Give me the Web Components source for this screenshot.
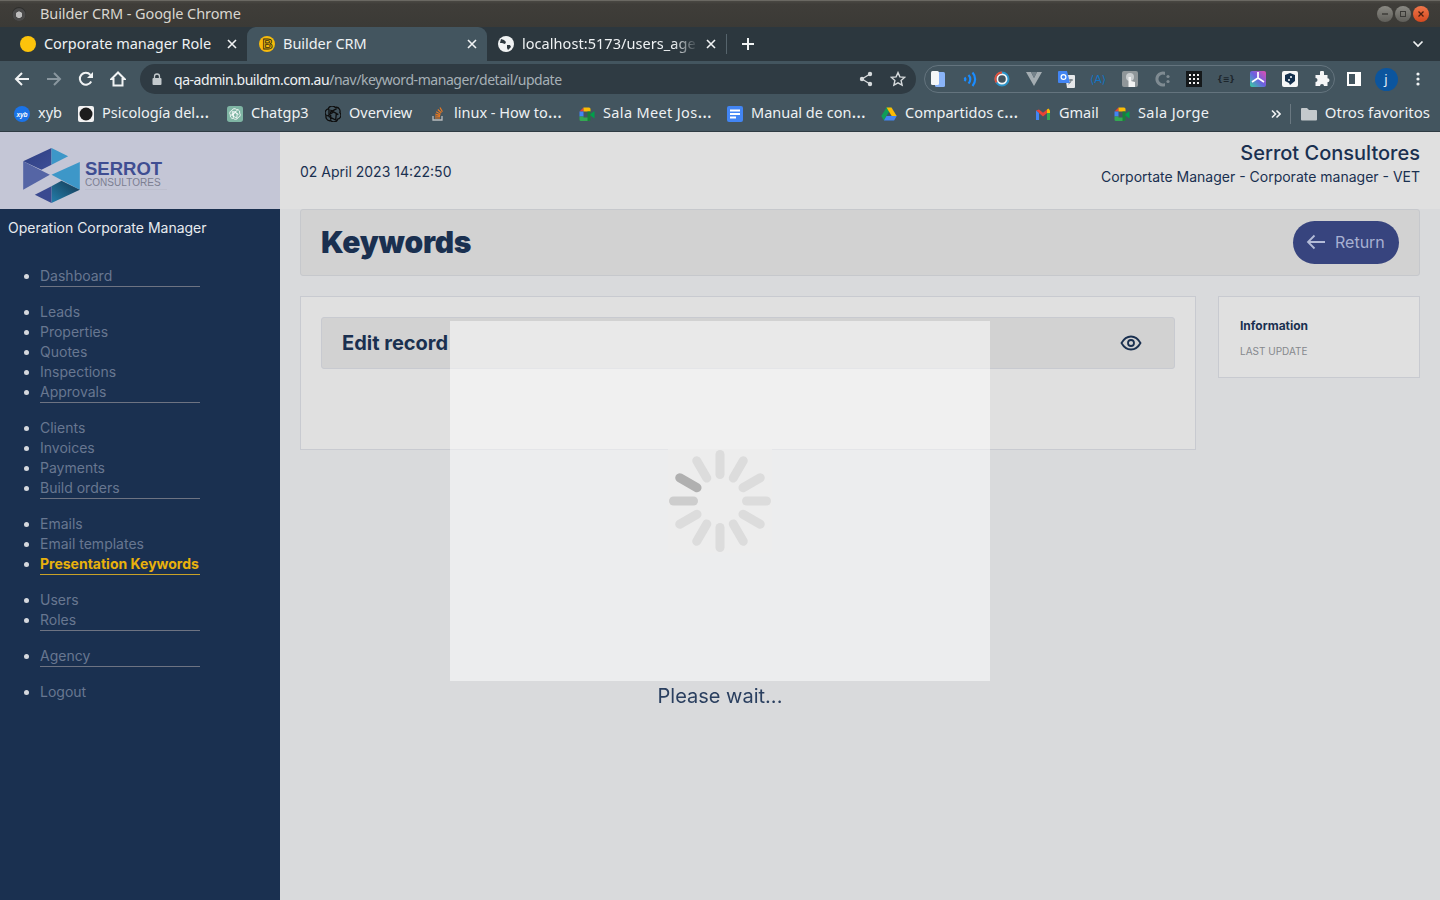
<!DOCTYPE html>
<html lang="en">
<head>
<meta charset="utf-8">
<title>Builder CRM</title>
<style>
  html, body { margin: 0; height: 100%; overflow: hidden; background: #d9dadc; }
  body { display: flex; flex-direction: column; font-family: "Inter", sans-serif; }
</style>
</head>
<body>
<browser-frame></browser-frame>
<crm-app>
  <side-nav slot="nav"></side-nav>
  <crm-header></crm-header>
  <title-bar></title-bar>
  <crm-content></crm-content>
</crm-app>
<wait-overlay></wait-overlay>

<script>
const MEET = `<svg width="16" height="16" viewBox="0 0 16 16"><path fill="#ea4335" d="M4.500 1.500V5.500H0.500z"/><path fill="#fbbc04" d="M4.500 1.500H10a1.500 1.500 0 0 1 1.500 1.500V5.500H4.500z"/><path fill="#4285f4" d="M0.500 5.500h4v5h-4z"/><path fill="#34a853" d="M0.500 10.500h4v1h6.500v3.500H2a1.500 1.500 0 0 1-1.500-1.500z"/><path fill="#188038" d="M8.500 5.500h3v8a1.500 1.500 0 0 1-1.500 1.500H8.500z"/><path fill="#00a04a" d="M11.500 8l4-3v7.500l-4-3z"/></svg>`;
const KNOT = 'M22.28 9.82a5.98 5.98 0 0 0-.52-4.91 6.05 6.05 0 0 0-6.51-2.9A6.07 6.07 0 0 0 4.98 4.18a5.98 5.98 0 0 0-4 2.9 6.05 6.05 0 0 0 .74 7.1 5.98 5.98 0 0 0 .51 4.91 6.05 6.05 0 0 0 6.52 2.9A5.98 5.98 0 0 0 13.26 24a6.06 6.06 0 0 0 5.77-4.21 5.99 5.99 0 0 0 4-2.9 6.06 6.06 0 0 0-.75-7.07zM8.5 20.5V9l9-5M3 15l10-6 7 4M6 5v11l10 5 1-10-9-5';

class BrowserFrame extends HTMLElement {
  constructor() {
    super();
    this.shadowDOM = this.attachShadow({mode: 'open'});
  }

  connectedCallback() {
    this.render();
  }

  render() {
    this.shadowDOM.innerHTML = `
      <style>
        :host { display: block; flex: none; font-family: "Noto Sans", "Open Sans", sans-serif; font-size: 14.5px; color: #eef1f3; }
      </style>
      <window-title></window-title>
      <tab-strip></tab-strip>
      <nav-toolbar></nav-toolbar>
      <bookmark-bar></bookmark-bar>
    `;
  }
}

class WindowTitle extends HTMLElement {
  constructor() {
    super();
    this.shadowDOM = this.attachShadow({mode: 'open'});
  }

  connectedCallback() {
    this.shadowDOM.innerHTML = `
      <style>
        :host { display: flex; align-items: center; height: 27px; padding: 0 11px 0 12px; background: linear-gradient(#4a4843 0, #3f3d39 3px, #3b3a36); color: #d8d6d0; border-top: 1px solid #6a6862; box-sizing: border-box; }
        .app { width: 14px; height: 14px; margin-right: 14px; border-radius: 50%; background: radial-gradient(circle at 50% 55%, #bdbdbd 0 3px, #4a4a4a 3.5px 6px, #2e2e2c 7px); }
        span { flex: 1; margin-bottom: 2px; letter-spacing: -.09px; }
        .btns { display: flex; gap: 2px; }
        .btns i { display: flex; width: 16px; height: 16px; border-radius: 50%; background: linear-gradient(#8a8983, #5f5e59); align-items: center; justify-content: center; }
        .btns i:last-child { background: linear-gradient(#f0764a, #d4491f); }
      </style>
      <div class="app"></div>
      <span>Builder CRM - Google Chrome</span>
      <div class="btns">
        <i><svg width="8" height="8"><path d="M1 4h6" stroke="#3a3936" stroke-width="1.4"/></svg></i>
        <i><svg width="8" height="8"><rect x="1.5" y="1.5" width="5" height="5" fill="none" stroke="#3a3936"/></svg></i>
        <i><svg width="8" height="8"><path d="M1.5 1.5l5 5m0-5l-5 5" stroke="#4a2011" stroke-width="1.3"/></svg></i>
      </div>
    `;
  }
}

class TabStrip extends HTMLElement {
  constructor() {
    super();
    this.shadowDOM = this.attachShadow({mode: 'open'});
  }

  connectedCallback() {
    const close = `<svg class="x" width="10" height="10"><path d="M1 1l8 8m0-8l-8 8" stroke="#f1f3f4" stroke-width="1.6"/></svg>`;
    this.shadowDOM.innerHTML = `
      <style>
        :host { display: flex; align-items: stretch; height: 34px; padding-left: 7px; background: #2c373e; }
        .tab { position: relative; display: flex; align-items: center; width: 240px; box-sizing: border-box; padding: 0 10px 0 13px; }
        .tab.on { background: #43555f; border-radius: 9px 9px 0 0; padding-left: 12px; }
        .tab.last { width: 239px; padding-left: 11px; }
        .tab svg.f { flex: none; margin-right: 8px; }
        .tab span { flex: 1; white-space: nowrap; margin-bottom: 2px; letter-spacing: -.04px; }
        .tab span.fade { letter-spacing: .05px; -webkit-mask-image: linear-gradient(90deg, #000 85%, transparent 99%); mask-image: linear-gradient(90deg, #000 85%, transparent 99%); }
        .x { flex: none; margin-left: 6px; }
        .sep { width: 1px; height: 20px; background: #56646c; align-self: center; }
        .plus { margin-left: 14px; align-self: center; }
        .chev { margin-left: auto; margin-right: 16px; align-self: center; }
      </style>
      <div class="tab"><svg class="f" width="16" height="16"><circle cx="8" cy="8" r="8" fill="#fcc30b"/></svg><span>Corporate manager Role</span>${close}</div>
      <div class="tab on"><svg class="f" width="16" height="16" viewBox="0 0 16 16"><circle cx="8" cy="8" r="8" fill="#f7bb0c"/><text x="8.500" y="13" text-anchor="middle" font-size="14" font-weight="700" font-family="Liberation Sans" fill="#f7bb0c" stroke="#332c10" stroke-width=".9">B</text></svg><span>Builder CRM</span>${close}</div>
      <div class="tab last"><svg class="f" width="16" height="16" viewBox="0 0 16 16"><circle cx="8" cy="8" r="8" fill="#f1f3f4"/><path d="M3 3l3 1 2 2-1 2-3-1-2 0zM9 9l3 0 1 2-3 3-1-2z" fill="#2c373e"/></svg><span class="fade">localhost:5173/users_age</span>${close}</div>
      <div class="sep"></div>
      <svg class="plus" width="14" height="14"><path d="M7 1v12M1 7h12" stroke="#f1f3f4" stroke-width="2"/></svg>
      <svg class="chev" width="12" height="8"><path d="M1.5 1.5L6 6l4.5-4.5" fill="none" stroke="#f1f3f4" stroke-width="1.7"/></svg>
    `;
  }
}

class NavToolbar extends HTMLElement {
  constructor() {
    super();
    this.shadowDOM = this.attachShadow({mode: 'open'});
  }

  connectedCallback() {
    this.shadowDOM.innerHTML = `
      <style>
        :host { display: flex; align-items: center; height: 36px; padding: 0 6px; background: #43555f; }
        .b { flex: none; width: 32px; height: 30px; display: flex; align-items: center; justify-content: center; }
        .omni { flex: none; margin-left: 6px; width: 776px; height: 30px; border-radius: 15px; background: #2f3b43; display: flex; align-items: center; box-sizing: border-box; padding: 0 2px 0 12px; font-size: 14px; }
        .omni .url { flex: 1; margin-left: 12px; white-space: nowrap; color: #a6b0b6; letter-spacing: -.45px; }
        .omni .url b { font-weight: 400; color: #eef1f3; }
        .pill { flex: none; margin-left: 8px; height: 28px; width: 411px; box-sizing: border-box; border: 1px solid #64747e; border-radius: 14px; display: flex; align-items: center; }
        .e { flex: none; width: 32px; height: 26px; display: flex; align-items: center; justify-content: center; }
        .e:first-child { margin-left: -3px; }
        .e text { font-family: "DejaVu Sans", sans-serif; }
        .av { width: 23px; height: 23px; border-radius: 50%; background: #0b559e; color: #e8f0f8; font-size: 13px; display: flex; align-items: center; justify-content: center; }
      </style>
      <div class="b"><svg width="16" height="16"><path d="M15 8H2M8 2L2 8l6 6" fill="none" stroke="#f1f3f4" stroke-width="2"/></svg></div>
      <div class="b"><svg width="16" height="16"><path d="M1 8h13M8 2l6 6-6 6" fill="none" stroke="#8a979f" stroke-width="2"/></svg></div>
      <div class="b"><svg width="16" height="16" viewBox="0 0 16 16"><path d="M13.2 10.5A6 6 0 1 1 12.4 3.8" fill="none" stroke="#f1f3f4" stroke-width="2"/><path d="M15 1v6H9z" fill="#f1f3f4"/></svg></div>
      <div class="b"><svg width="16" height="16" viewBox="0 0 16 16"><path d="M8 1.5L1.5 8H3.5v6.5h9V8h2z" fill="none" stroke="#f1f3f4" stroke-width="2"/></svg></div>
      <div class="omni">
        <svg width="10" height="12" viewBox="0 0 10 12"><rect x="0.5" y="5" width="9" height="7" rx="1" fill="#c4cacd"/><path d="M2.5 5V3.5a2.5 2.5 0 0 1 5 0V5" fill="none" stroke="#c4cacd" stroke-width="1.3"/></svg>
        <span class="url"><b>qa-admin.buildm.com.au</b>/nav/keyword-manager/detail/update</span>
        <div class="b"><svg width="14" height="16" viewBox="0 0 14 16"><path d="M11 3L3 8l8 5" fill="none" stroke="#d6dadc" stroke-width="1.3"/><circle cx="11" cy="3" r="2.2" fill="#d6dadc"/><circle cx="3" cy="8" r="2.2" fill="#d6dadc"/><circle cx="11" cy="13" r="2.2" fill="#d6dadc"/></svg></div>
        <div class="b"><svg width="16" height="16" viewBox="0 0 16 16"><path d="M8 1.6l1.9 4.3 4.7.5-3.5 3.1 1 4.6L8 11.8l-4.1 2.3 1-4.6L1.4 6.4l4.7-.5z" fill="none" stroke="#d6dadc" stroke-width="1.4"/></svg></div>
      </div>
      <div class="pill">
        <div class="e"><svg width="14" height="18" viewBox="0 0 14 18"><rect x="4" y="2" width="10" height="15" rx="1.5" fill="#8ab4f8"/><rect x="0" y="1" width="8" height="14" rx="1.5" fill="#f4f6f7"/></svg></div>
        <div class="e"><svg width="15" height="16" viewBox="0 0 15 16"><g fill="none" stroke="#1a8cff" stroke-width="2.200"><path d="M1.500 6.500a2.500 2.500 0 0 1 0 3.500"/><path d="M5.500 4a6 6 0 0 1 0 8.500"/><path d="M9.500 1.500a10 10 0 0 1 0 13.500"/></g></svg></div>
        <div class="e"><svg width="16" height="16"><circle cx="8" cy="8" r="6.500" fill="#f2f6f8" stroke="#2a93c9" stroke-width="2"/><path d="M8 1.500a6.500 6.500 0 0 0-5.500 10" fill="none" stroke="#e0503a" stroke-width="2"/><circle cx="8" cy="8" r="3.800" fill="#43555f"/></svg></div>
        <div class="e"><svg width="16" height="14" viewBox="0 0 16 14"><path d="M0 0h5l3 6 3-6h5L8 14z" fill="#a4adb2"/><path d="M5 0l3 6 3-6" fill="#76838b"/></svg></div>
        <div class="e"><svg width="17" height="17" viewBox="0 0 17 17"><path d="M7 4h9a1 1 0 0 1 1 1v11a1 1 0 0 1-1 1H9z" fill="#e6e8ea"/><path d="M1 0h8l3 12H1a1 1 0 0 1-1-1V1a1 1 0 0 1 1-1z" fill="#4285f4"/><circle cx="5.500" cy="6" r="2.400" fill="none" stroke="#fff" stroke-width="1.200"/><path d="M11 9h4M13 8v1c0 2-1 3-2.500 4" fill="none" stroke="#5f6a70"/></svg></div>
        <div class="e"><svg width="20" height="14" viewBox="0 0 20 14"><text x="10" y="11" text-anchor="middle" font-size="11" fill="#1274c4">⟨A⟩</text></svg></div>
        <div class="e"><svg width="16" height="16" viewBox="0 0 16 16"><rect width="16" height="16" rx="2" fill="#8f9699"/><circle cx="8" cy="6" r="4" fill="#c9cdcf"/><path d="M6.500 16V6h2.500v4l4 1v5z" fill="#f2f3f3"/></svg></div>
        <div class="e"><svg width="16" height="20" viewBox="0 0 16 20"><path d="M11 2.800A7.500 7.500 0 1 0 11 17.200V14A4.500 4.500 0 1 1 11 6z" fill="#7f8b92"/><circle cx="14" cy="7.500" r="1.600" fill="#7f8b92"/><circle cx="14" cy="12.500" r="1.600" fill="#7f8b92"/></svg></div>
        <div class="e"><svg width="16" height="16"><rect width="16" height="16" fill="#15191b"/><g fill="#f2f2f2"><rect x="3" y="3" width="2" height="2"/><rect x="7" y="3" width="2" height="2"/><rect x="11" y="3" width="2" height="2"/><rect x="3" y="7" width="2" height="2"/><rect x="7" y="7" width="2" height="2"/><rect x="11" y="7" width="2" height="2"/><rect x="3" y="11" width="2" height="2"/><rect x="7" y="11" width="2" height="2"/><rect x="11" y="11" width="2" height="2"/></g></svg></div>
        <div class="e"><svg width="18" height="12" viewBox="0 0 18 12"><text x="9" y="9" text-anchor="middle" font-size="8" font-weight="700" fill="#1d262c">{≡}</text></svg></div>
        <div class="e"><svg width="16" height="16" viewBox="0 0 16 16"><defs><linearGradient id="lg" x1="0" y1="1" x2="1" y2="0"><stop offset="0" stop-color="#35d0a0"/><stop offset=".5" stop-color="#6a60e0"/><stop offset="1" stop-color="#e24fb0"/></linearGradient></defs><rect width="16" height="16" rx="2" fill="url(#lg)"/><path d="M8 1v6l6 4M8 7l-6 4" fill="none" stroke="#fff" stroke-width="1.700"/></svg></div>
        <div class="e"><svg width="16" height="16" viewBox="0 0 16 16"><rect width="16" height="16" rx="2" fill="#f6f7f7"/><path d="M8 2l5 2v6l-5 4-1-2-4-2V4z" fill="#14304d"/><circle cx="9" cy="6" r="1" fill="#fff"/><circle cx="7" cy="9" r="1" fill="#fff"/></svg></div>
        <div class="e"><svg width="16" height="16" viewBox="0 0 16 16"><path d="M6 1.500a2 2 0 0 1 4 0V4h3.500v3.200a2 2 0 0 1 0 4V15H10a2 2 0 0 0-4 0H1.500v-4a2 2 0 0 0 0-4V4H6z" fill="#f5f6f7"/></svg></div>
      </div>
      <div class="b" style="margin-left:3px"><svg width="14" height="14"><rect x="1" y="1" width="12" height="12" fill="none" stroke="#fff" stroke-width="2"/><rect x="8" y="1" width="5" height="12" fill="#fff"/></svg></div>
      <div class="b"><div class="av">j</div></div>
      <div class="b"><svg width="4" height="14"><circle cx="2" cy="2" r="1.600" fill="#f1f3f4"/><circle cx="2" cy="7" r="1.600" fill="#f1f3f4"/><circle cx="2" cy="12" r="1.600" fill="#f1f3f4"/></svg></div>
    `;
  }
}

class BookmarkItem extends HTMLElement {
  constructor() {
    super();
    this.shadowDOM = this.attachShadow({mode: 'open'});
  }

  connectedCallback() {
    this.shadowDOM.innerHTML = `
      <style>
        :host { display: flex; flex: none; align-items: center; gap: 8px; }
        span { display: block; width: ${this.getAttribute('w')}px; white-space: nowrap; margin-bottom: 4px; letter-spacing: ${this.getAttribute('ls') || 0}px; }
        i { font-style: normal; font-size: 18px; line-height: 0; }
        ::slotted(svg) { display: block; flex: none; }
      </style>
      <slot></slot><span>${this.getAttribute('label')}</span>
    `;
  }
}

class BookmarkBar extends HTMLElement {
  constructor() {
    super();
    this.shadowDOM = this.attachShadow({mode: 'open'});
  }

  connectedCallback() {
    this.shadowDOM.innerHTML = `
      <style>
        :host { display: flex; align-items: center; height: 34px; padding-left: 14px; gap: 16px; background: #43555f; border-bottom: 1px solid #2f3b43; }
        .more { margin-left: auto; display: flex; align-items: center; font-size: 15px; }
        .sep { width: 1px; height: 20px; background: #6a7881; margin: 0 10px 0 9px; }
        .rest { display: flex; align-items: center; gap: 8px; padding-right: 10px; }
        .rest span { margin-bottom: 4px; }
      </style>
      <bookmark-item label="xyb" w="24"><svg width="16" height="16" viewBox="0 0 16 16"><circle cx="8" cy="8" r="8" fill="#1a73e8"/><text x="8" y="10.500" text-anchor="middle" font-size="6.500" font-style="italic" font-weight="700" font-family="Liberation Sans" fill="#fff">xyb</text></svg></bookmark-item>
      <bookmark-item label="Psicología del<i>…</i>" w="109"><svg width="16" height="16"><rect width="16" height="16" rx="2" fill="#f2f2f2"/><circle cx="8" cy="8" r="6.500" fill="#1c1c1c"/></svg></bookmark-item>
      <bookmark-item label="Chatgp3" w="58"><svg width="16" height="16" viewBox="0 0 24 24"><rect width="24" height="24" rx="4" fill="#7fb5a4"/><g transform="translate(4 4) scale(.667)"><path d="${KNOT}" fill="none" stroke="#fff" stroke-width="1.900"/></g></svg></bookmark-item>
      <bookmark-item label="Overview" w="65"><svg width="16" height="16" viewBox="0 0 24 24"><path d="${KNOT}" fill="none" stroke="#0e0e0e" stroke-width="2"/></svg></bookmark-item>
      <bookmark-item label="linux - How to<i>…</i>" w="109"><svg width="16" height="16" viewBox="0 0 16 16"><path d="M3 10v4h9v-4" fill="none" stroke="#b9bcbe" stroke-width="1.300"/><path d="M5 12h5M5 10l5 .4M5.300 8l4.900 1.300M6.200 5.800l4.400 2.400M7.800 3.500l3.600 3.400M10 1.500l2.400 4.200" stroke="#e87922" stroke-width="1.200" fill="none"/></svg></bookmark-item>
      <bookmark-item label="Sala Meet Jos<i>…</i>" w="108" ls=".35">${MEET}</bookmark-item>
      <bookmark-item label="Manual de con<i>…</i>" w="114"><svg width="16" height="16"><rect width="16" height="16" rx="2" fill="#4285f4"/><path d="M3 4.500h10M3 8h10M3 11.500h6" stroke="#fff" stroke-width="1.800"/></svg></bookmark-item>
      <bookmark-item label="Compartidos c<i>…</i>" w="114"><svg width="16" height="16" viewBox="0 0 16 16"><path d="M5.500 1.500h5L5.500 10l-2.600 4.500L0.300 10z" fill="#0f9d58"/><path d="M5.500 1.500h5l5.200 8.500h-5z" fill="#fbbc04"/><path d="M5.500 10h10.200l-2.600 4.500H2.900z" fill="#4285f4"/></svg></bookmark-item>
      <bookmark-item label="Gmail" w="39"><svg width="16" height="16" viewBox="0 0 16 16"><path d="M1 4.500l3-1 4 3.300 4-3.300 3 1-7 6z" fill="#ea4335"/><path d="M1 4.500V14h3V7z" fill="#4285f4"/><path d="M15 4.500V14h-3V7z" fill="#34a853"/><path d="M12 3.500l1.500-1 1.500 2V7l-3 0z" fill="#fbbc04"/></svg></bookmark-item>
      <bookmark-item label="Sala Jorge" w="72" ls=".4">${MEET}</bookmark-item>
      <div class="more">
        <svg width="10" height="10" viewBox="0 0 10 10"><path d="M1 1.500L4.500 5 1 8.500M5.500 1.500L9 5 5.500 8.500" fill="none" stroke="#f1f3f4" stroke-width="1.600"/></svg>
        <div class="sep"></div>
        <div class="rest"><svg width="16" height="14" viewBox="0 0 16 14"><path d="M0 2a1 1 0 0 1 1-1h5l2 2h7a1 1 0 0 1 1 1v8.500a1 1 0 0 1-1 1H1a1 1 0 0 1-1-1z" fill="#c4c9cc"/></svg><span>Otros favoritos</span></div>
      </div>
    `;
  }
}

class CrmApp extends HTMLElement {
  constructor() {
    super();
    this.shadowDOM = this.attachShadow({mode: 'open'});
  }

  connectedCallback() {
    this.shadowDOM.innerHTML = `
      <style>
        :host { display: flex; flex: 1; min-height: 0; background: #d9dadc; }
        main { flex: 1; min-width: 0; display: flex; flex-direction: column; }
      </style>
      <slot name="nav"></slot>
      <main><slot></slot></main>
    `;
  }
}

class SideNav extends HTMLElement {
  constructor() {
    super();
    this.shadowDOM = this.attachShadow({mode: 'open'});
  }

  connectedCallback() {
    const groups = [
      ['Dashboard'],
      ['Leads', 'Properties', 'Quotes', 'Inspections', 'Approvals'],
      ['Clients', 'Invoices', 'Payments', 'Build orders'],
      ['Emails', 'Email templates', '*Presentation Keywords'],
      ['Users', 'Roles'],
      ['Agency'],
      ['Logout'],
    ];
    const lists = groups.map(g => `<ul>${g.map(t =>
      t[0] === '*' ? `<li class="on">${t.slice(1)}</li>` : `<li>${t}</li>`).join('')}</ul>`).join('');
    this.shadowDOM.innerHTML = `
      <style>
        :host { display: flex; flex-direction: column; flex: none; width: 280px; background: #1a3050; font-family: "Inter", sans-serif; }
        .logo { height: 77px; flex: none; background: #c4c6d6; display: flex; align-items: center; padding-left: 23px; gap: 5px; box-sizing: border-box; }
        .logo svg { display: block; margin-top: 10px; }
        .word { display: flex; flex-direction: column; font-family: "Liberation Sans", sans-serif; margin-top: 10px; border-bottom: 1px solid #bcbecd; padding-right: 5px; }
        .word b { font-size: 18.500px; line-height: 16px; color: #3f4e92; }
        .word span { font-size: 10px; line-height: 12px; color: #7c7f92; letter-spacing: .05px; }
        h2 { margin: 0; padding: 10px 0 0 8px; font: 400 14px/18px "Inter", sans-serif; color: #e8ebef; }
        ul { margin: 29px 0 0; padding: 0 0 0 40px; width: 160px; box-sizing: content-box; font-size: 14px; line-height: 20px; color: #687790; }
        ul + ul { margin-top: 15px; }
        ul:not(:last-child) li:last-child { border-bottom: 1px solid #6d7382; }
        li::marker { color: #d5d8de; }
        li { height: 20px; }
        li.on { color: #e9b10c; font-weight: 700; border-bottom-color: #c9a227 !important; }
      </style>
      <div class="logo">
        <svg width="57" height="55" viewBox="70 55 170 165">
          <defs>
            <linearGradient id="a" x1="0" y1="0" x2="1" y2="1"><stop offset="0" stop-color="#2f3f82"/><stop offset="1" stop-color="#3c4e96"/></linearGradient>
            <linearGradient id="b" x1="1" y1="0" x2="0" y2="1"><stop offset="0" stop-color="#15364f"/><stop offset="1" stop-color="#2480ad"/></linearGradient>
          </defs>
          <path d="M70 95L155 55V105L125 120z" fill="url(#a)"/>
          <path d="M155 55L205 80L155 105z" fill="#3d97c8"/>
          <path d="M70 95L150 135L70 180z" fill="#5565a5"/>
          <path d="M240 97V180L155 135z" fill="#3d97c8"/>
          <path d="M240 180L185 153L155 170V220z" fill="url(#b)"/>
          <path d="M105 195L155 170V220z" fill="#3a4a90"/>
        </svg>
        <div class="word"><b>SERROT</b><span>CONSULTORES</span></div>
      </div>
      <h2>Operation Corporate Manager</h2>
      ${lists}
    `;
  }
}

class CrmHeader extends HTMLElement {
  constructor() {
    super();
    this.shadowDOM = this.attachShadow({mode: 'open'});
  }

  connectedCallback() {
    this.shadowDOM.innerHTML = `
      <style>
        :host { display: flex; flex: none; height: 77px; padding: 9px 20px 0; box-sizing: border-box; background: #e0e0e0; align-items: flex-start; justify-content: space-between; color: #1a3050; }
        .date { font: 400 14px/18px "Inter", sans-serif; margin-top: 22px; }
        .who { text-align: right; }
        .who h1 { margin: 0; font: 500 20px/24px "Inter", sans-serif; }
        .who p { margin: 3px 0 0; font: 400 14px/18px "Inter", sans-serif; }
      </style>
      <div class="date">02 April 2023 14:22:50</div>
      <div class="who"><h1>Serrot Consultores</h1><p>Corportate Manager - Corporate manager - VET</p></div>
    `;
  }
}

class TitleBar extends HTMLElement {
  constructor() {
    super();
    this.shadowDOM = this.attachShadow({mode: 'open'});
  }

  connectedCallback() {
    this.shadowDOM.innerHTML = `
      <style>
        :host { display: flex; flex: none; align-items: center; justify-content: space-between; height: 67px; margin: 0 20px; padding: 0 20px; box-sizing: border-box; background: #d2d2d2; border: 1px solid #c6c8cc; border-radius: 3px; }
        h1 { margin: -2px 0 0; font: 900 30px/36px "Inter", sans-serif; color: #1a3050; letter-spacing: -.25px; }
        button { display: flex; align-items: center; gap: 9px; height: 43px; width: 106px; padding: 0 0 2px 13px; box-sizing: border-box; border: 0; border-radius: 22px; background: #37447e; color: #a7b0d2; font: 400 16px "Inter", sans-serif; }
      </style>
      <h1>Keywords</h1>
      <button><svg width="20" height="16" viewBox="0 0 20 16"><path d="M19 8H2M8.500 1.500L2 8l6.500 6.500" fill="none" stroke="#b4bcd8" stroke-width="1.800"/></svg>Return</button>
    `;
  }
}

class CrmContent extends HTMLElement {
  constructor() {
    super();
    this.shadowDOM = this.attachShadow({mode: 'open'});
  }

  connectedCallback() {
    this.shadowDOM.innerHTML = `
      <style>
        :host { display: flex; flex: none; align-items: flex-start; gap: 22px; margin: 20px 20px 0; }
        .card { flex: none; width: 896px; height: 154px; box-sizing: border-box; padding: 20px; background: #e0e0e0; border: 1px solid #c8cad0; }
        .head { display: flex; align-items: center; justify-content: space-between; height: 52px; box-sizing: border-box; padding: 0 32px 0 20px; background: #d2d2d2; border: 1px solid #c8cad0; border-radius: 3px; }
        h3 { margin: 0; font: 700 20px/26px "Inter", sans-serif; color: #1a3050; }
        .info { flex: 1; height: 82px; box-sizing: border-box; padding: 22px 21px 0; background: #e0e0e0; border: 1px solid #c8cad0; }
        .info b { display: block; font: 700 12px/14px "Inter", sans-serif; color: #1a3050; }
        .info span { display: block; margin-top: 12px; font: 400 10px/12px "Inter", sans-serif; color: #85888d; }
      </style>
      <div class="card">
        <div class="head">
          <h3>Edit record</h3>
          <svg width="22" height="16" viewBox="0 0 22 16"><path d="M1.500 8C4 3.500 7 1.500 11 1.500S18 3.500 20.500 8C18 12.500 15 14.500 11 14.500S4 12.500 1.500 8z" fill="none" stroke="#1a3050" stroke-width="1.800"/><circle cx="11" cy="8" r="3" fill="none" stroke="#1a3050" stroke-width="1.800"/></svg>
        </div>
      </div>
      <div class="info"><b>Information</b><span>LAST UPDATE</span></div>
    `;
  }
}

class WaitOverlay extends HTMLElement {
  constructor() {
    super();
    this.shadowDOM = this.attachShadow({mode: 'open'});
  }

  connectedCallback() {
    let bars = '';
    for (let i = 0; i < 12; i++) {
      const fill = i === 10 ? '#b0b0b0' : i === 9 ? '#cdcdcd' : '#dcdcdc';
      bars += `<rect x="-4.500" y="-51" width="9" height="29" rx="4.500" fill="${fill}" transform="rotate(${i * 30})"/>`;
    }
    this.shadowDOM.innerHTML = `
      <style>
        :host { position: fixed; left: 450px; top: 321px; width: 540px; text-align: center; }
        .box { height: 360px; background: rgba(255,255,255,.5); display: flex; align-items: center; justify-content: center; }
        .box svg { display: block; background: #ededed; }
        p { margin: 3px 0 0; font: 400 20px/24px "Inter", sans-serif; color: #2a3f5f; }
      </style>
      <div class="box"><svg width="104" height="104" viewBox="-52 -52 104 104">${bars}</svg></div>
      <p>Please wait...</p>
    `;
  }
}

customElements.define('window-title', WindowTitle);
customElements.define('tab-strip', TabStrip);
customElements.define('nav-toolbar', NavToolbar);
customElements.define('bookmark-item', BookmarkItem);
customElements.define('bookmark-bar', BookmarkBar);
customElements.define('browser-frame', BrowserFrame);
customElements.define('side-nav', SideNav);
customElements.define('crm-header', CrmHeader);
customElements.define('title-bar', TitleBar);
customElements.define('crm-content', CrmContent);
customElements.define('crm-app', CrmApp);
customElements.define('wait-overlay', WaitOverlay);
</script>
</body>
</html>
